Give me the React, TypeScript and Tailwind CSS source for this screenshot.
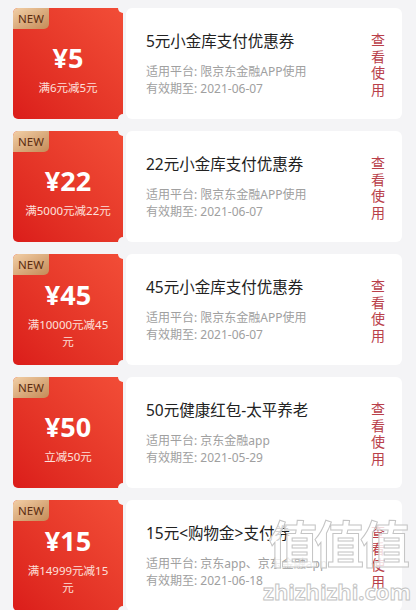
type Coupon = {
  amount: string;
  rule: string;
  title: string;
  platform: string;
  expire: string;
};

const coupons: Coupon[] = [
  { amount: '5', rule: '满6元减5元', title: '5元小金库支付优惠券', platform: '限京东金融APP使用', expire: '2021-06-07' },
  { amount: '22', rule: '满5000元减22元', title: '22元小金库支付优惠券', platform: '限京东金融APP使用', expire: '2021-06-07' },
  { amount: '45', rule: '满10000元减45元', title: '45元小金库支付优惠券', platform: '限京东金融APP使用', expire: '2021-06-07' },
  { amount: '50', rule: '立减50元', title: '50元健康红包-太平养老', platform: '京东金融app', expire: '2021-05-29' },
  { amount: '15', rule: '满14999元减15元', title: '15元<购物金>支付券', platform: '京东app、京东金融app', expire: '2021-06-18' },
];

function CouponCard({ coupon }: { coupon: Coupon }) {
  return (
    <div className="relative flex h-[110.5px] gap-[3px]">
      {/* 红色面额区 */}
      <div className="relative flex w-[110px] shrink-0 flex-col items-center justify-center rounded-[5px] bg-linear-to-bl from-[#f24d37] to-[#db1c1a] px-[12px] pt-[10px] text-center text-white">
        <div className="absolute left-0 top-0 flex h-[21px] w-[36px] items-center justify-center rounded-tl-[5px] rounded-br-[5px] bg-linear-to-br from-[#f2cfa6] to-[#c48b57] text-[11.5px] leading-none text-[#5b2c10]">
          NEW
        </div>
        <div className="text-[27px] font-bold leading-[34px]">¥{coupon.amount}</div>
        <div className="mt-1 text-[11.5px] leading-[17px] text-[#fde0dc]">{coupon.rule}</div>
        <span className="absolute -right-[5px] -top-[5px] h-[10px] w-[10px] rounded-full bg-[#f4f4f6]" />
        <span className="absolute -bottom-[5px] -right-[5px] h-[10px] w-[10px] rounded-full bg-[#f4f4f6]" />
      </div>

      {/* 白色说明区 */}
      <div className="flex flex-1 rounded-[6px] bg-white pl-[20px] pr-[17px] pt-[22px]">
        <div className="flex-1">
          <div className="text-[15.5px] leading-[22px] text-[#222]">{coupon.title}</div>
          <div className="mt-[11px] text-[12px] leading-[17px] text-[#a0a0a0]">
            <div>适用平台: {coupon.platform}</div>
            <div>有效期至: {coupon.expire}</div>
          </div>
        </div>
        <div className="flex w-[14px] flex-col pt-[2px] text-[14px] leading-[16.5px] text-[#b9404a]">
          <span>查</span>
          <span>看</span>
          <span>使</span>
          <span>用</span>
        </div>
      </div>
    </div>
  );
}

export default function App() {
  return (
    <div className="relative h-[610px] w-[416px] overflow-hidden bg-[#f4f4f6] font-['Noto_Sans','Noto_Sans_CJK_SC',sans-serif]">
      <div className="flex flex-col gap-[12.5px] pl-[13px] pr-[14px] pt-[8px]">
        {coupons.map((c) => (
          <CouponCard key={c.amount} coupon={c} />
        ))}
      </div>

      {/* 水印 */}
      <div className="pointer-events-none absolute left-[262px] top-[508px] flex w-[150px] flex-col items-center text-white/80 [-webkit-text-stroke:1px_#c4c4c4]">
        <div className="text-[50px] font-bold leading-[72px] tracking-[-4px]">值值值</div>
        <div className="-mt-[1px] text-[22px] font-bold leading-[24px]">zhizhizhi.com</div>
      </div>
    </div>
  );
}
